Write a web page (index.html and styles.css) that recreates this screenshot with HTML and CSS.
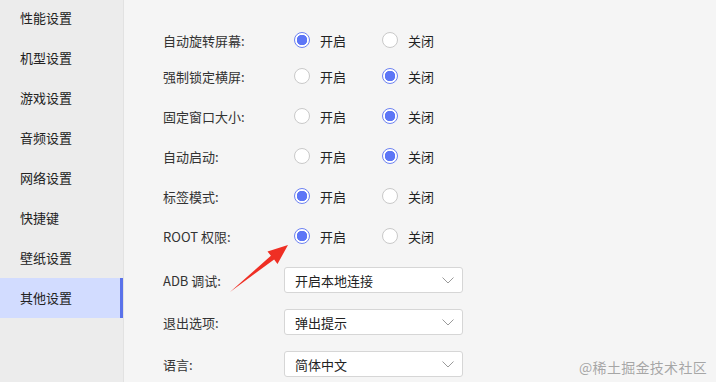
FILE: index.html
```html
<!DOCTYPE html>
<html lang="zh-CN">
<head>
<meta charset="utf-8">
<title>其他设置</title>
<link rel="stylesheet" href="styles.css">
</head>
<body>
<div class="app">
  <nav class="sidebar">
    <div class="nav-item">性能设置</div>
    <div class="nav-item">机型设置</div>
    <div class="nav-item">游戏设置</div>
    <div class="nav-item">音频设置</div>
    <div class="nav-item">网络设置</div>
    <div class="nav-item">快捷键</div>
    <div class="nav-item">壁纸设置</div>
    <div class="nav-item active">其他设置</div>
  </nav>
  <main class="content">
    <div class="row row-first">
      <span class="label">自动旋转屏幕:</span>
      <div class="options">
        <span class="option"><span class="radio checked"></span>开启</span>
        <span class="option"><span class="radio"></span>关闭</span>
      </div>
    </div>
    <div class="row">
      <span class="label">强制锁定横屏:</span>
      <div class="options">
        <span class="option"><span class="radio"></span>开启</span>
        <span class="option"><span class="radio checked"></span>关闭</span>
      </div>
    </div>
    <div class="row">
      <span class="label">固定窗口大小:</span>
      <div class="options">
        <span class="option"><span class="radio"></span>开启</span>
        <span class="option"><span class="radio checked"></span>关闭</span>
      </div>
    </div>
    <div class="row">
      <span class="label">自动启动:</span>
      <div class="options">
        <span class="option"><span class="radio"></span>开启</span>
        <span class="option"><span class="radio checked"></span>关闭</span>
      </div>
    </div>
    <div class="row">
      <span class="label">标签模式:</span>
      <div class="options">
        <span class="option"><span class="radio checked"></span>开启</span>
        <span class="option"><span class="radio"></span>关闭</span>
      </div>
    </div>
    <div class="row">
      <span class="label">ROOT 权限:</span>
      <div class="options">
        <span class="option"><span class="radio checked"></span>开启</span>
        <span class="option"><span class="radio"></span>关闭</span>
      </div>
    </div>
    <div class="select-rows">
      <div class="row row-select">
        <span class="label label-select">ADB 调试:</span>
        <div class="select"><span>开启本地连接</span><svg class="chevron" width="12" height="7" viewBox="0 0 12 7"><path d="M0.5 0.5 L6 6 L11.5 0.5" fill="none" stroke="#9a9a9a" stroke-width="1"/></svg></div>
      </div>
      <div class="row row-select">
        <span class="label label-select">退出选项:</span>
        <div class="select"><span>弹出提示</span><svg class="chevron" width="12" height="7" viewBox="0 0 12 7"><path d="M0.5 0.5 L6 6 L11.5 0.5" fill="none" stroke="#9a9a9a" stroke-width="1"/></svg></div>
      </div>
      <div class="row row-select">
        <span class="label label-select">语言:</span>
        <div class="select"><span>简体中文</span><svg class="chevron" width="12" height="7" viewBox="0 0 12 7"><path d="M0.5 0.5 L6 6 L11.5 0.5" fill="none" stroke="#9a9a9a" stroke-width="1"/></svg></div>
      </div>
    </div>
  </main>
  <svg class="arrow" width="70" height="60" viewBox="0 0 70 60">
    <polygon points="4,51 48.1,18.5 51.5,23 62,4 41.5,10.5 44.9,14.7" fill="#ef2f24"/>
  </svg>
  <div class="watermark">@稀土掘金技术社区</div>
</div>
</body>
</html>
```
FILE: styles.css
```css
* { box-sizing: border-box; }
html, body { margin: 0; padding: 0; }
body {
  width: 716px;
  height: 382px;
  overflow: hidden;
  font-family: "Noto Sans CJK SC", "Noto Sans", sans-serif;
  font-size: 13px;
  color: #333;
  background: #f5f5f5;
}
.app {
  position: relative;
  display: flex;
  width: 716px;
  height: 382px;
  overflow: hidden;
}
.sidebar {
  width: 124px;
  flex: none;
  background: #ececec;
  border-right: 1px solid #e2e2e2;
  margin-top: -2px;
  display: flex;
  flex-direction: column;
}
.nav-item {
  flex: none;
  height: 40px;
  line-height: 40px;
  padding-left: 20px;
  color: #222;
  font-size: 13px;
}
.nav-item.active {
  background: #d2dcff;
  box-shadow: inset -3px 0 0 #5a72ea;
}
.content {
  flex: 1;
  padding-left: 39px;
  padding-top: 24px;
  display: flex;
  flex-direction: column;
}
.row {
  flex: none;
  display: flex;
  align-items: center;
  height: 40px;
}
.row-first { height: 32px; }
.label {
  width: 131px;
  flex: none;
  color: #333;
}
.label-select { width: 121px; }
.options {
  display: flex;
  gap: 36px;
}
.option {
  display: flex;
  align-items: center;
  gap: 10px;
  color: #222;
}
.radio {
  width: 16px;
  height: 16px;
  border-radius: 50%;
  border: 1px solid #c9c9c9;
  background: #fff;
  flex: none;
}
.radio.checked {
  border-color: #6d82f2;
  background: radial-gradient(circle, #5d76f6 0 5px, #fff 5.5px);
}
.select-rows {
  flex: none;
  margin-top: 3px;
  display: flex;
  flex-direction: column;
}
.row-select { height: 42px; }
.select {
  width: 179px;
  height: 26px;
  border: 1px solid #d6d6d6;
  border-radius: 3px;
  background: #fff;
  display: flex;
  align-items: center;
  justify-content: space-between;
  padding: 0 8px 0 10px;
  color: #222;
}
.chevron { flex: none; }
.arrow {
  position: absolute;
  left: 226px;
  top: 241px;
}
.watermark {
  position: absolute;
  right: 9px;
  bottom: 5px;
  font-size: 14px;
  color: rgba(140, 140, 140, 0.75);
  letter-spacing: 0.3px;
}
```
